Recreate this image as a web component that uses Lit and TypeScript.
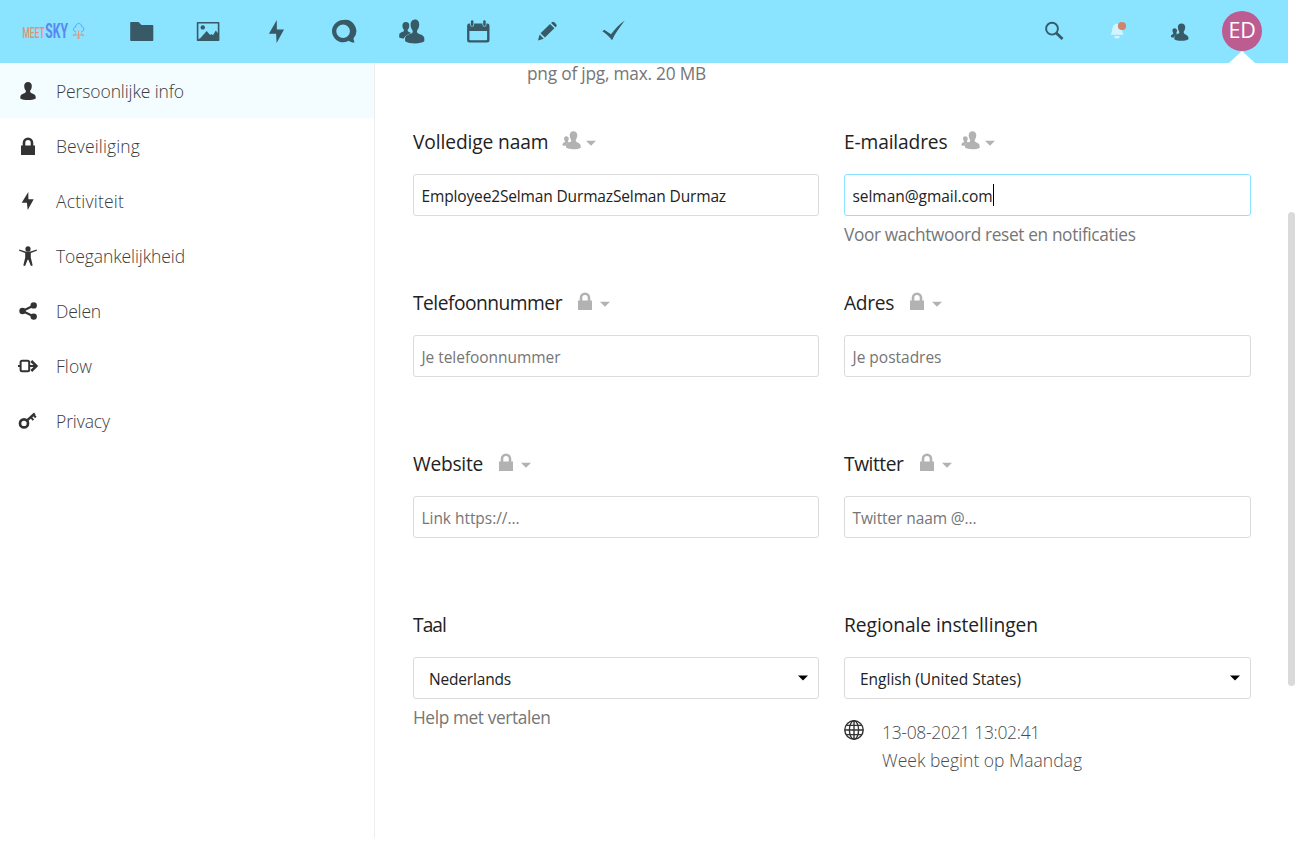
import { LitElement, html, svg, css, nothing } from "lit";
import type { SVGTemplateResult } from "lit";
import { customElement, property } from "lit/decorators.js";

/* Single line of text whose tracking is adjusted to fill a given advance width. */
@customElement("fit-text")
export class FitText extends LitElement {
  @property() text = "";
  @property({ type: Number }) span = 0;

  static styles = css`
    :host { display: inline-block; white-space: pre; }
    .run { display: inline-block; white-space: pre; }
  `;

  render() {
    return html`<span class="run">${this.text}</span>`;
  }

  protected async firstUpdated() {
    this.fit();
    await document.fonts.ready;
    this.fit();
  }

  private fit() {
    const run = this.renderRoot.querySelector<HTMLElement>(".run");
    if (!run || !this.span) return;
    run.style.letterSpacing = "0px";
    const natural = run.getBoundingClientRect().width;
    run.style.letterSpacing = `${(this.span - natural) / this.text.length}px`;
  }
}

const fit = (text: string, span: number) => html`<fit-text .text=${text} .span=${span}></fit-text>`;

const appIcons: SVGTemplateResult[] = [
  /* files */
  svg`<path d="M3 4h7.6l2.9 3h11q.8 0 .8.8v14.4q0 .8-.8.8H3q-.8 0-.8-.8V4.8q0-.8.8-.8z"/>`,
  /* photos */
  svg`<path fill-rule="evenodd" d="M2.6 4h21q.8 0 .8.8v17.4q0 .8-.8.8h-21q-.8 0-.8-.8V4.8q0-.8.8-.8zM3.4 5.5v16h19.4v-16z"/><circle cx="7.8" cy="9.4" r="2.2"/><path d="M3.4 21.9v-1.2l1.6-.3 6.7-7.4 3.4 4 1.300-1 1.600 1.200 2.800-4.700 2.400 3.100v6.300z"/>`,
  /* activity */
  svg`<path d="M13.800 2 5.900 15.700h7.200l.5 9.300 7.400-13.500h-7.100z"/>`,
  /* talk */
  svg`<path fill-rule="evenodd" d="M13.100 2.100a11.100 11.100 0 1 0 5.600 20.700c1.600 1.200 4 2 5.600 1.700.5-.4-.7-2.200-.8-4.200a11.100 11.100 0 0 0-10.400-18.200zM13.100 6.400a6.800 6.800 0 1 1 0 13.600a6.800 6.800 0 0 1 0-13.600z"/>`,
  /* contacts */
  svg`<path d="M17.300 1.500c-3 0-4.800 2.200-4.700 5.200.1 2.700.8 4.200 2 5.700.4 1.500 0 2.500-1.300 3-3.200 1.200-6 2-6.200 4.500v3.300c2.500 1.600 6 2.200 10 2.200s7.300-.7 9.200-2.100v-3.300c-.3-2.500-3-3.300-6-4.600-1.200-.5-1.600-1.600-1.200-3 1.200-1.500 2-3 2.100-5.700.1-3-1.600-5.200-3.900-5.200z"/><path d="M7.900 4c-2.300 0-3.500 1.500-3.500 3.700.1 1.900.6 3 1.500 4 .2 1.100-.1 1.700-1 2.100-2 .8-3.600 1.300-3.700 3v2.600c1.400.6 3 .9 4.700 1 .7-2.600 3.400-3.800 6.400-4.900l.7-.5c-.8-.5-2.500-1-2.900-1.400-.5-.4-.6-1.100-.4-1.800.9-1 1.500-2.100 1.600-4C11.400 5.500 10.200 4 7.900 4z"/>`,
  /* calendar */
  svg`<path fill-rule="evenodd" d="M4.300 5.500h.9v1.200c0 2.500 3.900 2.500 3.900 0V5.500h8.400v1.200c0 2.500 3.900 2.500 3.900 0V5.500h.8q2.300 0 2.300 2.300v14.400q0 2.300-2.300 2.300H4.300q-2.200 0-2.200-2.300V7.800q0-2.300 2.200-2.300zM4.400 13v8.200q0 1 1 1h15.700q1 0 1-1V13z"/><rect x="5.900" y="2.200" width="2.500" height="5.700" rx="1.200"/><rect x="18.200" y="2.200" width="2.500" height="5.700" rx="1.200"/>`,
  /* notes */
  svg`<path d="m7.600 15.300 9.400-9.300 4.400 4.300-9.500 9.300zM6.600 16.500l4.100 4.200L5 22.400zM18.100 4.900l.7-.7q1.200-.9 2.500 0l2 2q.9 1.200 0 2.400l-.8.7z"/>`,
  /* tasks */
  svg`<path d="M2.400 13.300 4.300 11.800 11 16.300C15 11 19.300 6.200 24.800 2.500 20 9 15.500 14.500 12 22.200 9.500 18.700 6.300 16 2.400 13.300z"/>`,
];

const lockShape = svg`<path d="M3 9.500h1.700V6.800a5.300 5.300 0 0 1 10.600 0v2.700H17v9.500H3zM7.300 9.500h5.400V6.800a2.700 2.700 0 0 0-5.400 0z" fill-rule="evenodd"/>`;

const groupShape = svg`<path d="M11.400 1.200c-2.400 0-3.800 1.700-3.700 4 .1 2 .5 3.200 1.400 4.500.2 1.300 0 1.900-.9 2.300-2.400.8-4.100 1.400-4.200 3.200v2.400c1.700 1.300 4.300 1.700 7.200 1.700s5.800-.4 7.500-1.600v-1.700c-.2-2.100-2-3-4-3.900-.8-.4-1-1.200-.9-2.400.9-1.300 1.400-2.500 1.500-4.500.1-2.300-1.500-4-3.900-4z"/><path d="M4.200 6.200c-1.500 0-2.200 1-2.200 2.400.1 1.200.4 1.900.9 2.500.1.700 0 1.100-.5 1.300C1.300 12.800.5 13.200.5 14.200v1.100c.8.5 1.800.6 3 .6.300-2 2-2.900 3.900-3.700-.7-.2-1.300-.4-1.500-.7v-.4c.5-.6.9-1.300.9-2.500 0-1.400-1-2.400-2.600-2.400z"/>`;

const navItems: { label: string; span: number; icon: SVGTemplateResult }[] = [
  { label: "Persoonlijke info", span: 128, icon: svg`<path d="M10 2C7.500 2 6.100 3.700 6.200 6c.1 2.100.6 3.400 1.600 4.600.2 1.300-.1 2.100-1 2.500-2.500 1.100-4.400 1.600-4.500 3.800v1.600C4 19.600 6.800 20 10 20s6-.4 7.700-1.500v-1.600c-.1-2.200-2-2.700-4.500-3.800-.9-.4-1.200-1.200-1-2.500 1-1.200 1.500-2.500 1.600-4.600C13.900 3.700 12.500 2 10 2z"/>` },
  { label: "Beveiliging", span: 84, icon: svg`<g transform="translate(0 1)">${lockShape}</g>` },
  { label: "Activiteit", span: 68, icon: svg`<path d="M10.300 2 3.700 12.800h5.200L9.700 20l6-10.800h-5.300z"/>` },
  { label: "Toegankelijkheid", span: 129, icon: svg`<circle cx="10" cy="3.900" r="2.600"/><path d="M1.300 4.500 7.500 6.500h5l6.200-2 .2 1.300-6.100 2.200v4.400l1.900 8.100-1.800.4L10.400 14.700h-.8l-2.500 6.200-1.800-.4 1.900-8.100V8L1.100 5.800z"/>` },
  { label: "Delen", span: 45, icon: svg`<circle cx="4.500" cy="11" r="3.200"/><circle cx="15.700" cy="5.400" r="3.200"/><circle cx="15.700" cy="16.600" r="3.200"/><path d="M15.700 5.400 4.500 11l11.200 5.600" fill="none" stroke="currentColor" stroke-width="2.200"/>` },
  { label: "Flow", span: 36, icon: svg`<g fill="none" stroke="currentColor" stroke-width="2.200"><rect x="2.600" y="5.700" width="8.600" height="10.600" rx="1.500" stroke-width="2"/><path d="M0 11h2.500M11 11h7.500"/><path d="m13.300 6 5.200 5-5.200 5" stroke-width="2.600"/></g>` },
  { label: "Privacy", span: 54, icon: svg`<g fill="none" stroke="currentColor"><circle cx="6" cy="13.400" r="4" stroke-width="2.700"/><path d="M8.800 10.600 16.800 3.500" stroke-width="2.400"/><path d="m12.600 6.900 2.800 3.200M15.200 4.500l2.600 3" stroke-width="2"/></g>` },
];

type Field = {
  label: string; labelSpan: number; scope?: "group" | "lock";
  value: string; valueSpan: number;
  kind?: "placeholder" | "select" | "focus";
  hint?: string; hintSpan?: number; locale?: boolean;
};

const fields: Field[] = [
  { label: "Volledige naam", labelSpan: 135.5, scope: "group", value: "Employee2Selman DurmazSelman Durmaz", valueSpan: 304.5 },
  { label: "E-mailadres", labelSpan: 103.5, scope: "group", value: "selman@gmail.com", valueSpan: 140, kind: "focus", hint: "Voor wachtwoord reset en notificaties", hintSpan: 291.5 },
  { label: "Telefoonnummer", labelSpan: 149, scope: "lock", value: "Je telefoonnummer", valueSpan: 139, kind: "placeholder" },
  { label: "Adres", labelSpan: 50, scope: "lock", value: "Je postadres", valueSpan: 89, kind: "placeholder" },
  { label: "Website", labelSpan: 70, scope: "lock", value: "Link https://...", valueSpan: 98, kind: "placeholder" },
  { label: "Twitter", labelSpan: 59.5, scope: "lock", value: "Twitter naam @...", valueSpan: 124, kind: "placeholder" },
  { label: "Taal", labelSpan: 33, value: "Nederlands", valueSpan: 82, kind: "select", hint: "Help met vertalen", hintSpan: 137.5 },
  { label: "Regionale instellingen", labelSpan: 194, value: "English (United States)", valueSpan: 161, kind: "select", locale: true },
];

@customElement("app-root")
export class AppRoot extends LitElement {
  static styles = css`
    :host {
      display: flex;
      width: 1295px;
      height: 843px;
      overflow: hidden;
      background: #fff;
      font-family: "Open Sans", "Noto Sans", sans-serif;
      color: #222;
    }
    * { box-sizing: border-box; }
    svg { display: block; flex: none; fill: currentColor; }
    .page { width: 1288px; display: flex; flex-direction: column; }
    .scroll { width: 7px; padding-top: 212px; }
    .thumb { height: 474px; border-radius: 4px; background: #dadada; }

    .bar { height: 63px; flex: none; background: #8ae3ff; color: #375a66; display: flex; }
    .logo { width: 108px; padding: 20px 0 0 20px; }
    .logo text { font-family: Roboto, sans-serif; }
    .meet { font-size: 14px; font-weight: 500; fill: #e5906f; }
    .sky { font-size: 19.5px; font-weight: 700; fill: #5a87f2; }
    .apps { display: flex; flex: 1; }
    .app { width: 67.5px; padding: 18px 0 0 19.75px; }
    .tools { display: flex; padding-right: 14.5px; }
    .tool { width: 63px; display: flex; justify-content: center; padding-top: 19px; }
    .account { width: 63px; display: flex; flex-direction: column; align-items: center; padding-top: 11px; }
    .avatar { width: 40px; height: 40px; border-radius: 50%; background: #bc5c91; color: #fff; display: flex; align-items: center; justify-content: center; font-size: 21.5px; line-height: 38px; padding-bottom: 2px; }
    .pointer { color: #fff; }

    .body { flex: 1; display: flex; min-height: 0; }
    .side { width: 375px; height: 775px; border-right: 1px solid #ededed; }
    .item { height: 55px; display: flex; align-items: center; gap: 18px; padding: 1px 0 0 18px; color: #333; }
    .item.active { background: #f3fcff; }
    .item svg { margin-top: -1px; }
    .name { font-size: 17.5px; font-weight: 300; color: #3c3c3c; line-height: 28px; }

    .main { flex: 1; padding-left: 38px; overflow: hidden; }
    .note { margin: 0 0 39px 114px; height: 22px; line-height: 22px; font-size: 17.3px; color: #767676; }
    .grid { display: grid; grid-template-columns: 406px 407px; column-gap: 25px; grid-auto-rows: 161px; }
    .head { height: 36px; margin-bottom: 14px; display: flex; font-size: 19.2px; line-height: 36px; color: #222; }
    .scope { display: flex; gap: 4px; padding: 6px 0 0 13px; color: #b2b2b2; }
    .scope.lock { gap: 5px; }
    .box { height: 42px; border: 1px solid #dbdbdb; border-radius: 3px; padding: 2px 8px 0 7.5px; display: flex; align-items: center; font-size: 15.5px; line-height: 22px; color: #222; }
    .box.focus { border-color: #8ae3ff; }
    .box.placeholder { color: #757575; }
    .box.select { padding: 2px 10px 0 15px; justify-content: space-between; }
    .box.select svg { margin-top: -2px; color: #000; }
    .cursor { width: 1px; height: 22px; background: #000; margin-top: -3px; }
    .hint { font-size: 17.3px; line-height: 28px; margin-top: 5px; color: #767676; }
    .locale { display: flex; gap: 18px; padding-top: 19px; color: #333; }
    .lines { font-size: 17.5px; font-weight: 300; line-height: 28px; color: #4c4c4c; display: flex; flex-direction: column; }
  `;

  private field(f: Field) {
    return html`<div>
      <div class="head">
        ${fit(f.label, f.labelSpan)}
        ${f.scope
          ? html`<div class="scope ${f.scope}">
              <svg width="20" height="20" viewBox="0 0 20 20">${f.scope === "group" ? groupShape : lockShape}</svg>
              <svg width="10" height="20" viewBox="0 0 10 20"><path d="M0 10.7h10L5 15.7z"/></svg>
            </div>`
          : nothing}
      </div>
      <div class="box ${f.kind ?? ""}">
        ${fit(f.value, f.valueSpan)}
        ${f.kind === "focus" ? html`<span class="cursor"></span>` : nothing}
        ${f.kind === "select" ? html`<svg width="10" height="6" viewBox="0 0 10 6"><path d="M0 .5h10l-5 5z"/></svg>` : nothing}
      </div>
      ${f.hint ? html`<div class="hint">${fit(f.hint, f.hintSpan ?? 0)}</div>` : nothing}
      ${f.locale
        ? html`<div class="locale">
            <svg width="20" height="24" viewBox="0 -2 20 24">
              <g fill="none" stroke="currentColor" stroke-width="1.4">
                <circle cx="10" cy="10" r="9.2"/><ellipse cx="10" cy="10" rx="4.6" ry="9.2"/>
                <path d="M10 .8v18.4M.8 10h18.4M2.3 5.4h15.4M2.3 14.600h15.400"/>
              </g>
            </svg>
            <div class="lines">${fit("13-08-2021 13:02:41", 158)}${fit("Week begint op Maandag", 200)}</div>
          </div>`
        : nothing}
    </div>`;
  }

  render() {
    return html`
      <div class="page">
        <header class="bar">
          <div class="logo">
            <svg width="68" height="22" viewBox="0 0 68 22">
              <text class="meet" transform="translate(2.500 18) scale(.6 1)">MEET</text>
              <text class="sky" transform="translate(25.300 18) scale(.62 1)">SKY</text>
              <path d="M55.600 11.500C52.600 11.300 52.800 7.400 55.400 7.200 55.800 2.300 61.300 2.400 61.800 6.600 64.600 6.800 64.400 11.400 61.500 11.500" fill="none" stroke="#5fa0f5"/>
              <path d="M58.500 10.500v7M55.500 12.500v2.500h2.500M61.500 12.500v2.500h-2.500M53.500 15h2M61.500 15h2" fill="none" stroke="#d99a86"/>
              <circle cx="58.500" cy="17.700" r="1.200" fill="#d99a86"/><circle cx="53.800" cy="15.200" r="1" fill="#d99a86"/><circle cx="63" cy="15.200" r="1" fill="#d99a86"/>
            </svg>
          </div>
          <nav class="apps">
            ${appIcons.map((i) => html`<div class="app"><svg width="28" height="28" viewBox="0 0 28 28">${i}</svg></div>`)}
          </nav>
          <div class="tools">
            <div class="tool"><svg width="24" height="24" viewBox="0 0 24 24"><g fill="none" stroke="currentColor"><circle cx="11" cy="9.700" r="5.900" stroke-width="1.900"/><path d="m15 13.700 6.500 6.200" stroke-width="2.800"/></g></svg></div>
            <div class="tool"><svg width="24" height="24" viewBox="0 0 24 24"><path fill="#d2f4ff" d="M13 4.800c-3.600.5-4.600 3-4.800 6.200-.1 2-.9 3.200-1.200 4v.8h12.300V15c-.5-.9-1.200-2-1.300-4V6zM10.300 16.900h5.400a2.700 2.700 0 0 1-5.400 0z"/><circle cx="18" cy="7" r="4.100" fill="#d08468"/></svg></div>
            <div class="tool"><svg width="24" height="24" viewBox="-3.500 -3.300 24 24"><g transform="scale(.96)">${groupShape}</g></svg></div>
            <div class="account">
              <div class="avatar">${fit("ED", 27)}</div>
              <svg class="pointer" width="26" height="12" viewBox="0 0 26 12"><path d="M0 12 13 0l13 12z"/></svg>
            </div>
          </div>
        </header>
        <div class="body">
          <nav class="side">
            ${navItems.map((n, i) => html`<div class="item ${i === 0 ? "active" : ""}">
              <svg width="20" height="21" viewBox="0 0 20 21">${n.icon}</svg>
              <span class="name">${fit(n.label, n.span)}</span>
            </div>`)}
          </nav>
          <main class="main">
            <div class="note">${fit("png of jpg, max. 20 MB", 179)}</div>
            <div class="grid">${fields.map((f) => this.field(f))}</div>
          </main>
        </div>
      </div>
      <div class="scroll"><div class="thumb"></div></div>
    `;
  }
}
